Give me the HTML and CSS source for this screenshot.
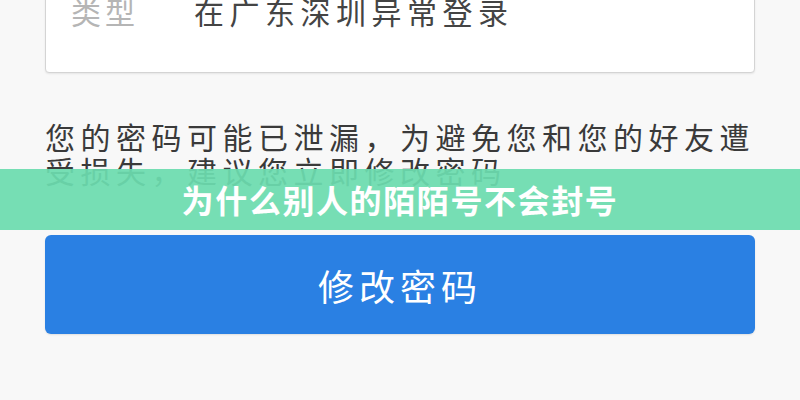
FILE: index.html
```html
<!DOCTYPE html>
<html lang="zh-CN">
<head>
    <meta charset="UTF-8">
    <meta name="viewport" content="width=device-width, initial-scale=1.0">
    <title>为什么别人的陌陌号不会封号</title>
    <link rel="stylesheet" href="styles.css">
</head>
<body>
    <div class="page">
        <div class="login-card">
            <div class="login-row">
                <span class="login-label">类型</span>
                <span class="login-value">在广东深圳异常登录</span>
            </div>
        </div>

        <p class="warning">您的密码可能已泄漏，为避免您和您的好友遭受损失，建议您立即修改密码</p>

        <button class="change-btn">修改密码</button>
    </div>

    <div class="title-banner">为什么别人的陌陌号不会封号</div>
</body>
</html>
```

FILE: styles.css
```css
body {
    margin: 0;
    height: 400px;
    overflow: hidden;
    background: #f8f8f8;
    font-family: "Noto Sans CJK SC", "Noto Sans", sans-serif;
    position: relative;
}

.page {
    padding: 0 45px;
}

.login-card {
    margin-top: -30px;
    height: 103px;
    background: #fff;
    border: 1px solid #d4d4d4;
    border-radius: 4px;
    box-shadow: 0 1px 2px rgba(0,0,0,0.08);
    box-sizing: border-box;
}

.login-row {
    display: flex;
    white-space: nowrap;
    padding: 20px 0 0 25px;
    line-height: 40px;
    font-size: 30px;
    letter-spacing: 4px;
}

.login-label {
    color: #b5b5b5;
}

.login-value {
    color: #444;
    margin-left: 55px;
    letter-spacing: 5.5px;
}

.warning {
    margin: 46px 0 0;
    font-size: 30px;
    line-height: 34px;
    letter-spacing: 5.5px;
    color: #3a3a3a;
}

.change-btn {
    display: block;
    width: 100%;
    height: 99px;
    margin-top: 48px;
    border: none;
    border-radius: 6px;
    background: #2a80e3;
    color: #fff;
    font-family: inherit;
    font-size: 36px;
    letter-spacing: 5px;
    box-shadow: 0 1px 2px rgba(0,0,0,0.1);
}

.title-banner {
    position: absolute;
    left: 0;
    right: 0;
    top: 169px;
    height: 61px;
    background: rgba(108, 220, 174, 0.93);
    color: #fff;
    font-size: 32px;
    font-weight: bold;
    line-height: 61px;
    text-align: center;
    letter-spacing: 1.6px;
}
```
